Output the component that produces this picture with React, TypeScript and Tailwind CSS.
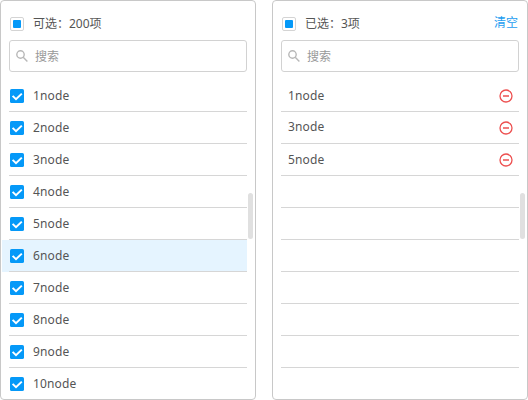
import type { ReactNode } from 'react';

const available = Array.from({ length: 10 }, (_, i) => `${i + 1}node`);
const selected = ['1node', '3node', '5node', '', '', '', '', '', '', ''];

function PartialBox() {
  return (
    <span className="flex h-[14px] w-[14px] shrink-0 items-center justify-center rounded-[2px] border border-[#d4d4d4] bg-white">
      <span className="h-2 w-2 rounded-[1px] bg-[#0599f8]" />
    </span>
  );
}

function CheckedBox() {
  return (
    <svg className="h-[14px] w-[14px] shrink-0" viewBox="0 0 14 14" fill="none">
      <rect width="14" height="14" rx="1.6" fill="#0599f8" />
      <path d="M2.6 6.9 6 10.2 11.8 4.6" stroke="#fff" strokeWidth="2" />
    </svg>
  );
}

function SearchField() {
  return (
    <div className="ml-2 flex h-8 w-[238px] items-center rounded-[3px] border border-[#d2d2d2] pl-[6px]">
      <svg className="h-3 w-3 shrink-0" viewBox="0 0 12 12" fill="none" stroke="#b8b8b8" strokeWidth="1.4">
        <circle cx="4.5" cy="4.5" r="3.7" />
        <path d="m7.2 7.2 4.2 4.2" />
      </svg>
      <span className="ml-[7px] mt-px leading-[18px] text-[#999]">搜索</span>
    </div>
  );
}

function Panel({ title, action, children }: { title: string; action?: string; children: ReactNode }) {
  return (
    <section className="relative h-[400px] w-64 shrink-0 overflow-hidden rounded-[4px] border border-[#c8c8c8] bg-white">
      <header className="flex h-[39px] items-center pl-[9px] pr-[9px] pt-[6px]">
        <PartialBox />
        <span className="ml-[9px] leading-[18px]">{title}</span>
        {action && <span className="-mt-px ml-auto leading-[18px] text-[#1c9df0]">{action}</span>}
      </header>
      <SearchField />
      <ul className="mt-2 tracking-[0.12px]">{children}</ul>
      <span className="absolute right-[2px] top-[192px] h-[46px] w-[5px] rounded-full bg-[#e0e0e0]" />
    </section>
  );
}

export default function App() {
  return (
    <main className="flex h-[400px] w-[528px] gap-4 overflow-hidden bg-white font-['Noto_Sans','Noto_Sans_CJK_SC',sans-serif] text-[12px] text-[#555]">
      <Panel title="可选：200项">
        {available.map((name, i) => (
          <li key={name} className={i === 5 ? 'ml-px w-[245px] bg-[#e5f4ff] pl-[7px]' : 'ml-px w-[245px] pl-[7px]'}>
            <div className="flex h-8 items-center border-b border-[#d6d6d6] pl-px pt-px">
              <CheckedBox />
              <span className="-mt-px ml-[9px] leading-[18px]">{name}</span>
            </div>
          </li>
        ))}
      </Panel>
      <Panel title="已选：3项" action="清空">
        {selected.map((name, i) => (
          <li key={i} className="ml-2 flex h-8 w-[238px] items-center border-b border-[#d6d6d6] pl-[7px] pr-[6px] pt-px">
            {name && (
              <>
                <span className={i === 1 ? '-mt-[3px] leading-[18px]' : '-mt-px leading-[18px]'}>{name}</span>
                <svg className="ml-auto h-[14px] w-[14px]" viewBox="0 0 14 14" fill="none" stroke="#ed5050">
                  <circle cx="7" cy="7" r="6" strokeWidth="1.3" />
                  <path d="M4 7h6" strokeWidth="1.6" />
                </svg>
              </>
            )}
          </li>
        ))}
      </Panel>
    </main>
  );
}
